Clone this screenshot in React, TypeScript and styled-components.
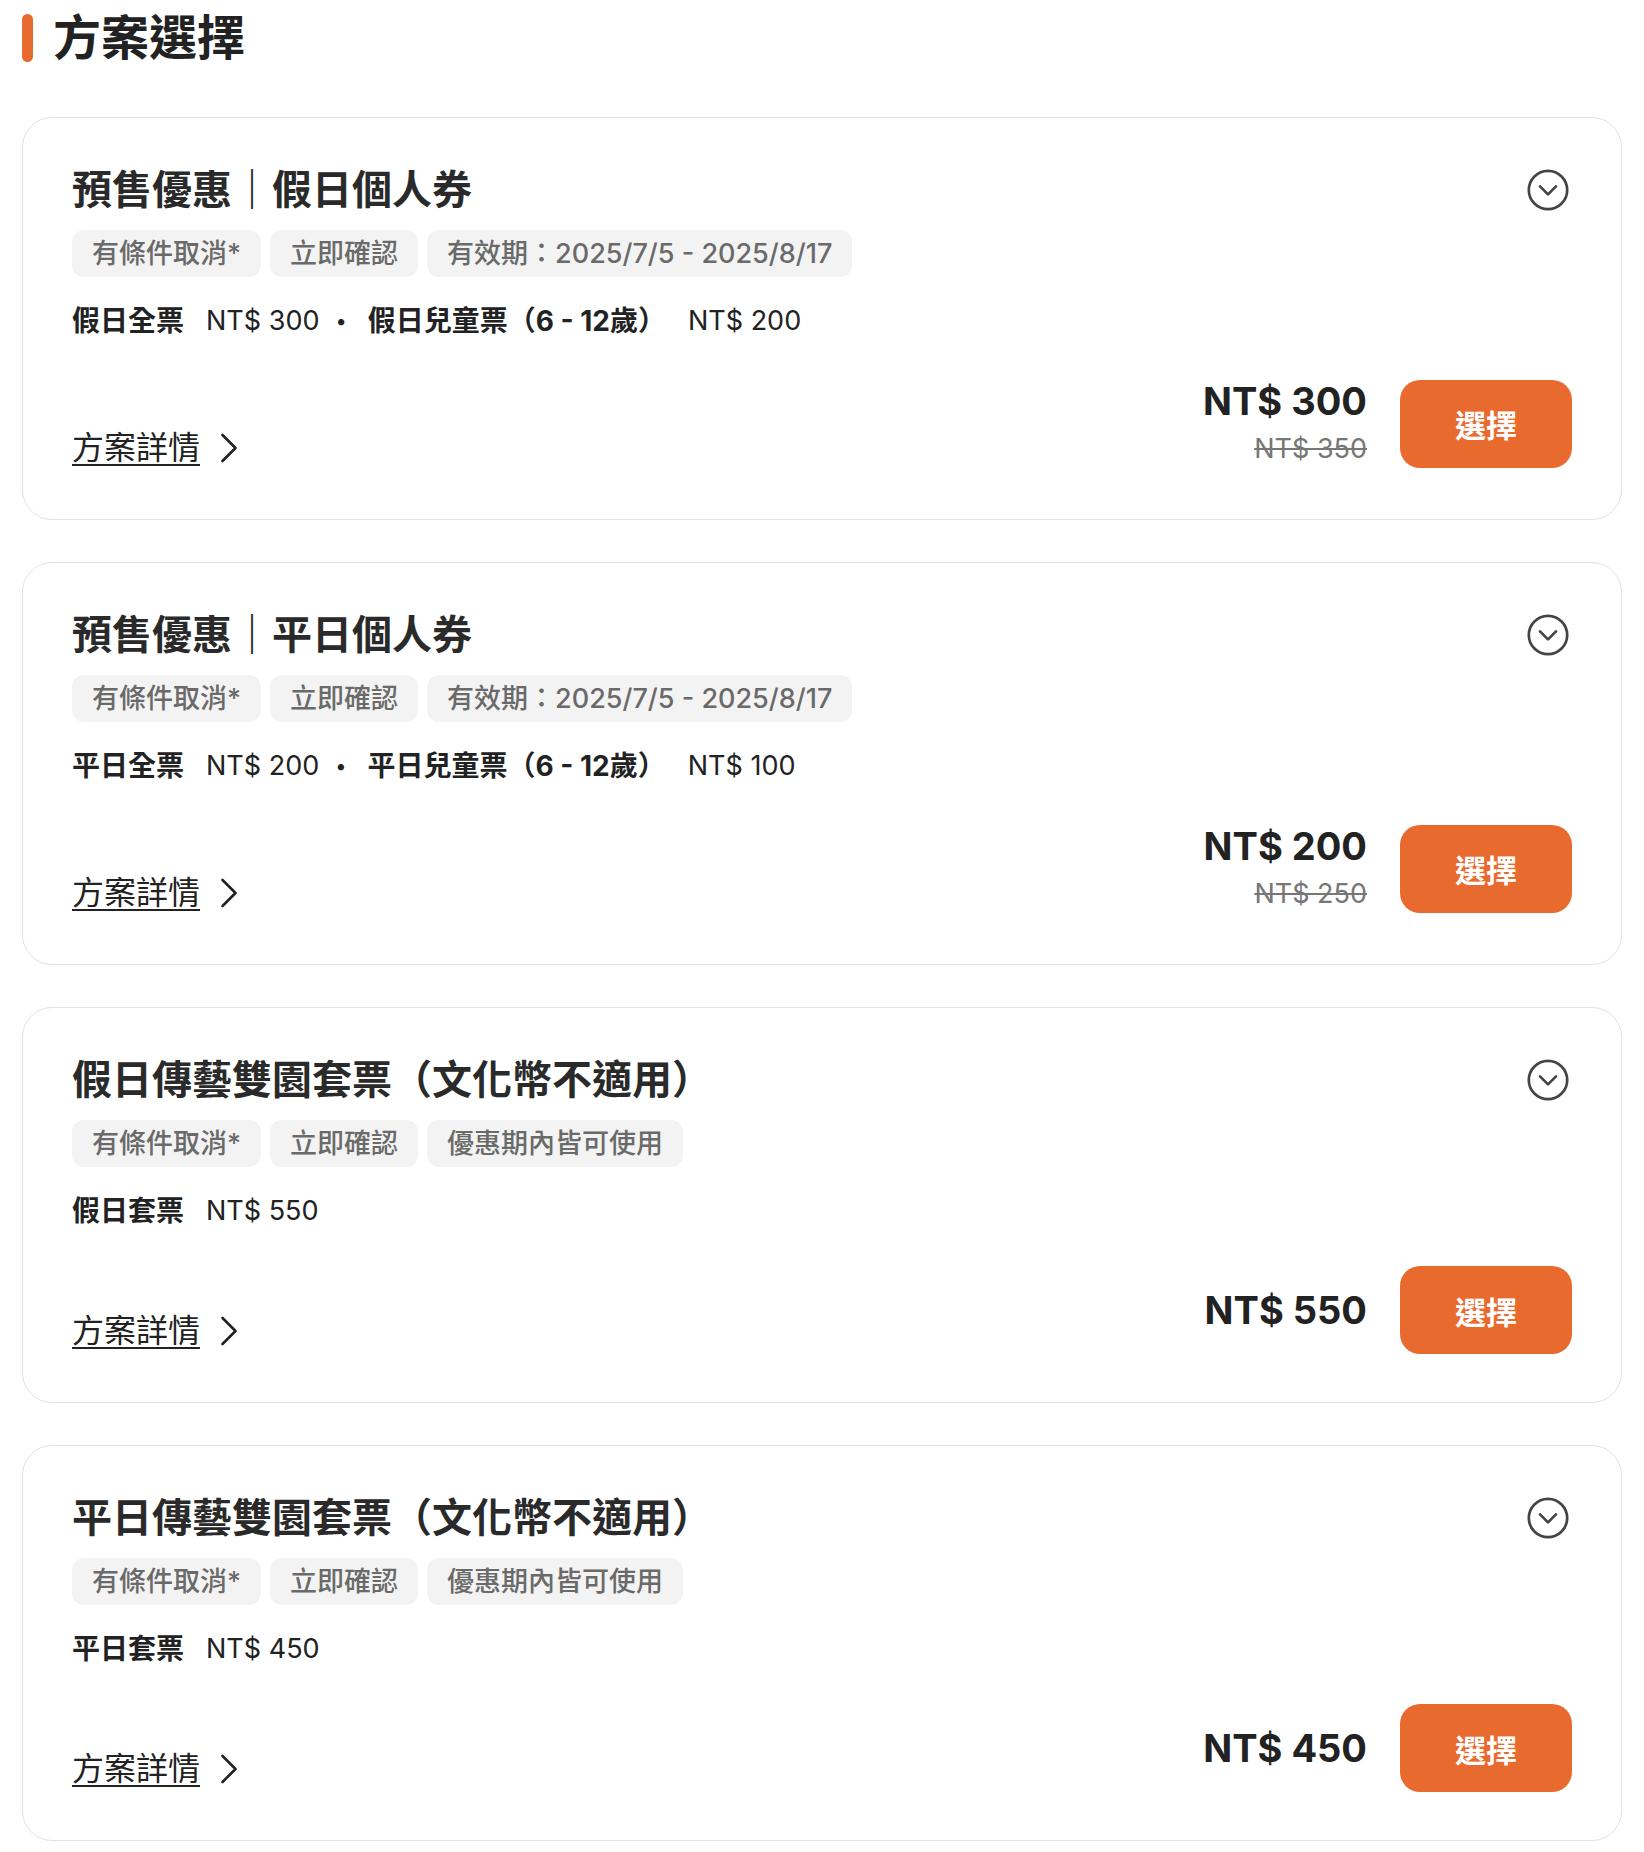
import React from "react";
import styled, { createGlobalStyle } from "styled-components";

const GlobalStyle = createGlobalStyle`
  body {
    margin: 0;
    background: #fff;
    font-family: Inter, "Noto Sans CJK TC", sans-serif;
    color: #222;
  }
`;

const Page = styled.div`
  padding: 0 22px 12px 22px;
`;

const Header = styled.div`
  display: flex;
  align-items: center;
  gap: 20px;
  height: 76px;
  margin-bottom: 41px;
`;

const HeaderBar = styled.div`
  width: 11px;
  height: 48px;
  border-radius: 6px;
  background: #e96a2e;
`;

const HeaderTitle = styled.h2`
  margin: 0;
  font-size: 48px;
  line-height: 58px;
  font-weight: 700;
  color: #222;
`;

const List = styled.div`
  display: flex;
  flex-direction: column;
  gap: 42px;
`;

const Card = styled.div`
  border: 1px solid #e2e2e2;
  border-radius: 30px;
  padding: 44px 49px 48px 49px;
  display: flex;
  flex-direction: column;
`;

const TitleRow = styled.div`
  display: flex;
  justify-content: space-between;
  align-items: center;
  height: 56px;
`;

const CardTitle = styled.h3`
  margin: 0;
  font-size: 40px;
  line-height: 56px;
  font-weight: 700;
  color: #2a2a2a;
`;

const ToggleIcon = styled.button`
  width: 48px;
  height: 48px;
  padding: 0;
  border: none;
  background: none;
  color: #444;
  cursor: pointer;
  svg {
    display: block;
  }
`;

const Tags = styled.div`
  display: flex;
  gap: 9px;
  margin-top: 12px;
`;

const Tag = styled.span`
  height: 47px;
  line-height: 47px;
  padding: 0 20px;
  border-radius: 12px;
  background: #f3f3f3;
  color: #6a6a6a;
  font-size: 27px;
  font-weight: 500;
`;

const PriceLine = styled.div`
  display: flex;
  align-items: center;
  margin-top: 23px;
  height: 42px;
  line-height: 42px;
`;

const Label = styled.span`
  font-size: 28px;
  font-weight: 700;
  color: #222;
  margin-right: 22px;
`;

const Amount = styled.span`
  font-size: 27px;
  color: #222;
`;

const Dot = styled.span`
  font-size: 20px;
  margin: 0 21px 0 16px;
  color: #222;
`;

const BottomRow = styled.div`
  display: flex;
  justify-content: space-between;
  align-items: flex-end;
  margin-top: 34px;
`;

const DetailLink = styled.a`
  display: flex;
  align-items: center;
  gap: 20px;
  font-size: 32px;
  line-height: 46px;
  color: #222;
  cursor: pointer;
  span {
    text-decoration: underline;
    text-decoration-thickness: 2px;
    text-underline-offset: 5px;
  }
`;

const Buy = styled.div`
  display: flex;
  align-items: center;
  gap: 33px;
`;

const PriceCol = styled.div`
  display: flex;
  flex-direction: column;
  align-items: flex-end;
`;

const BigPrice = styled.span`
  font-size: 38px;
  line-height: 51px;
  font-weight: 700;
  color: #222;
`;

const OldPrice = styled.span`
  font-size: 27px;
  line-height: 44px;
  color: #777;
  text-decoration: line-through;
  text-decoration-thickness: 2px;
`;

const SelectButton = styled.button`
  width: 172px;
  height: 88px;
  border: none;
  border-radius: 20px;
  background: #e96a2e;
  color: #fff;
  font-family: inherit;
  font-size: 31px;
  font-weight: 700;
  cursor: pointer;
`;

type Item = { label: string; price: string };

type Plan = {
  title: string;
  tags: string[];
  items: Item[];
  price: string;
  oldPrice?: string;
};

const plans: Plan[] = [
  {
    title: "預售優惠｜假日個人券",
    tags: ["有條件取消*", "立即確認", "有效期：2025/7/5 - 2025/8/17"],
    items: [
      { label: "假日全票", price: "NT$ 300" },
      { label: "假日兒童票（6 - 12歲）", price: "NT$ 200" },
    ],
    price: "NT$ 300",
    oldPrice: "NT$ 350",
  },
  {
    title: "預售優惠｜平日個人券",
    tags: ["有條件取消*", "立即確認", "有效期：2025/7/5 - 2025/8/17"],
    items: [
      { label: "平日全票", price: "NT$ 200" },
      { label: "平日兒童票（6 - 12歲）", price: "NT$ 100" },
    ],
    price: "NT$ 200",
    oldPrice: "NT$ 250",
  },
  {
    title: "假日傳藝雙園套票（文化幣不適用）",
    tags: ["有條件取消*", "立即確認", "優惠期內皆可使用"],
    items: [{ label: "假日套票", price: "NT$ 550" }],
    price: "NT$ 550",
  },
  {
    title: "平日傳藝雙園套票（文化幣不適用）",
    tags: ["有條件取消*", "立即確認", "優惠期內皆可使用"],
    items: [{ label: "平日套票", price: "NT$ 450" }],
    price: "NT$ 450",
  },
];

const CircleChevron = () => (
  <svg
    width="48"
    height="48"
    viewBox="0 0 24 24"
    fill="none"
    stroke="currentColor"
    strokeWidth="1.35"
    strokeLinecap="round"
    strokeLinejoin="round"
  >
    <circle cx="12" cy="12" r="9.6" />
    <path d="m16 10.2-4 4-4-4" />
  </svg>
);

const ChevronRight = () => (
  <svg width="18" height="30" viewBox="0 0 18 30" fill="none">
    <path
      d="M2.5 2 L15.5 15 L2.5 28"
      stroke="#222"
      strokeWidth="2.6"
      strokeLinecap="round"
      strokeLinejoin="round"
    />
  </svg>
);

const PlanCard = ({ plan }: { plan: Plan }) => (
  <Card>
    <TitleRow>
      <CardTitle>{plan.title}</CardTitle>
      <ToggleIcon aria-label="展開">
        <CircleChevron />
      </ToggleIcon>
    </TitleRow>
    <Tags>
      {plan.tags.map((t) => (
        <Tag key={t}>{t}</Tag>
      ))}
    </Tags>
    <PriceLine>
      {plan.items.map((item, i) => (
        <React.Fragment key={item.label}>
          {i > 0 && <Dot>•</Dot>}
          <Label>{item.label}</Label>
          <Amount>{item.price}</Amount>
        </React.Fragment>
      ))}
    </PriceLine>
    <BottomRow>
      <DetailLink>
        <span>方案詳情</span>
        <ChevronRight />
      </DetailLink>
      <Buy>
        <PriceCol>
          <BigPrice>{plan.price}</BigPrice>
          {plan.oldPrice && <OldPrice>{plan.oldPrice}</OldPrice>}
        </PriceCol>
        <SelectButton>選擇</SelectButton>
      </Buy>
    </BottomRow>
  </Card>
);

const App = () => {
  return (
    <>
      <GlobalStyle />
      <Page>
        <Header>
          <HeaderBar />
          <HeaderTitle>方案選擇</HeaderTitle>
        </Header>
        <List>
          {plans.map((p) => (
            <PlanCard key={p.title} plan={p} />
          ))}
        </List>
      </Page>
    </>
  );
};

export default App;
